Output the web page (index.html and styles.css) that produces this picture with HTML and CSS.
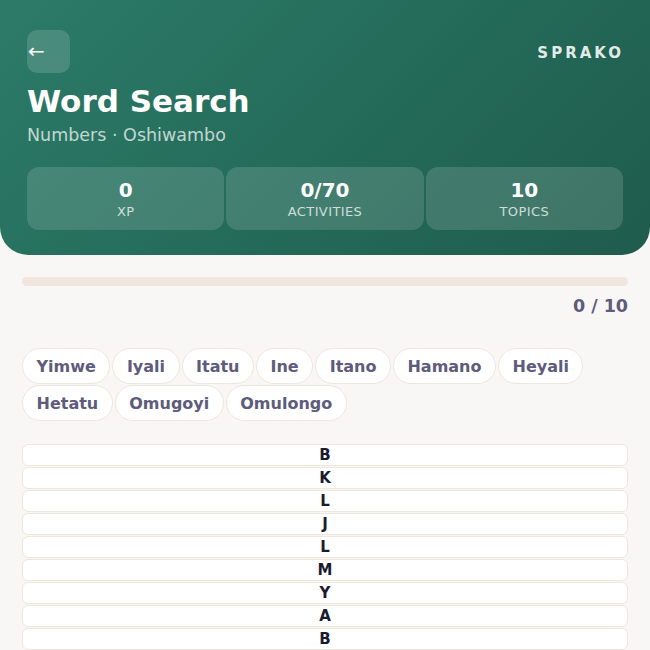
FILE: index.html
```html
<!DOCTYPE html>
<html lang="en">
<head>
    <meta charset="UTF-8">
    <meta name="viewport" content="width=device-width, initial-scale=1.0">
    <title>Word Search</title>
    <link rel="stylesheet" href="styles.css">
</head>
<body>
    <!-- Top banner -->
    <header class="hero">
        <div class="hero-top">
            <button class="back-btn">&larr;</button>
            <span class="brand">SPRAKO</span>
        </div>
        <h1>Word Search</h1>
        <p class="subtitle">Numbers · Oshiwambo</p>

        <div class="stats">
            <div class="stat">
                <span class="stat-value">0</span>
                <span class="stat-label">XP</span>
            </div>
            <div class="stat">
                <span class="stat-value">0/70</span>
                <span class="stat-label">Activities</span>
            </div>
            <div class="stat">
                <span class="stat-value">10</span>
                <span class="stat-label">Topics</span>
            </div>
        </div>
    </header>

    <main class="game">
        <div class="progress"><div class="progress-fill"></div></div>
        <div class="found-count">0 / 10</div>

        <!-- Words to find -->
        <div class="word-list">
            <span class="word">Yimwe</span>
            <span class="word">Iyali</span>
            <span class="word">Itatu</span>
            <span class="word">Ine</span>
            <span class="word">Itano</span>
            <span class="word">Hamano</span>
            <span class="word">Heyali</span>
            <span class="word">Hetatu</span>
            <span class="word">Omugoyi</span>
            <span class="word">Omulongo</span>
        </div>

        <!-- Letter grid -->
        <div class="grid">
            <div class="grid-row">B</div>
            <div class="grid-row">K</div>
            <div class="grid-row">L</div>
            <div class="grid-row">J</div>
            <div class="grid-row">L</div>
            <div class="grid-row">M</div>
            <div class="grid-row">Y</div>
            <div class="grid-row">A</div>
            <div class="grid-row">B</div>
        </div>
    </main>
</body>
</html>
```

FILE: styles.css
```css
body {
    font-family: "DejaVu Sans", sans-serif;
    margin: 0;
    padding: 0;
    background-color: #f9f7f5;
}

.hero {
    background: linear-gradient(135deg, #2c7b68 0%, #246a59 55%, #1f5c4d 100%);
    color: #fff;
    padding: 30px 27px 25px;
    border-radius: 0 0 28px 28px;
}

.hero-top {
    display: flex;
    justify-content: space-between;
    align-items: center;
}

.back-btn {
    width: 43px;
    height: 43px;
    border: none;
    border-radius: 10px;
    background-color: rgba(255, 255, 255, 0.15);
    color: #fff;
    font-family: "DejaVu Sans", sans-serif;
    font-size: 20px;
    text-align: left;
    padding: 0 0 2px 1px;
    cursor: pointer;
}

.brand {
    font-size: 15px;
    font-weight: bold;
    letter-spacing: 3px;
    color: rgba(255, 255, 255, 0.88);
    margin: 2px -1px 0 0;
}

.hero h1 {
    font-size: 31px;
    margin: 9px 0 0;
    line-height: 38px;
}

.subtitle {
    font-size: 17.5px;
    margin: 5px 0 0;
    color: rgba(255, 255, 255, 0.72);
}

.stats {
    display: flex;
    gap: 2px;
    margin-top: 22px;
}

.stat {
    flex: 1;
    height: 63px;
    border-radius: 12px;
    background-color: rgba(255, 255, 255, 0.14);
    display: flex;
    flex-direction: column;
    align-items: center;
    justify-content: center;
}

.stat-value {
    font-size: 20px;
    font-weight: bold;
    line-height: 24px;
}

.stat-label {
    font-size: 13px;
    text-transform: uppercase;
    letter-spacing: 0.4px;
    color: rgba(255, 255, 255, 0.75);
    line-height: 16px;
    margin-top: 2px;
}

.game {
    padding: 22px 22px 0;
}

.progress {
    height: 9px;
    border-radius: 5px;
    background-color: #f0e6dd;
    overflow: hidden;
}

.progress-fill {
    width: 0;
    height: 100%;
    background-color: #2c7b68;
}

.found-count {
    text-align: right;
    font-size: 17.5px;
    font-weight: bold;
    color: #5e5b7b;
    margin-top: 10px;
}

.word-list {
    display: flex;
    flex-wrap: wrap;
    gap: 1px 2px;
    margin-top: 32px;
}

.word {
    height: 36px;
    box-sizing: border-box;
    padding: 0 13.5px;
    display: flex;
    align-items: center;
    background-color: #fff;
    border: 1.5px solid #f0e6dc;
    border-radius: 18px;
    font-size: 16px;
    font-weight: bold;
    color: #5e5b7c;
}

.grid {
    display: flex;
    flex-direction: column;
    gap: 1px;
    margin-top: 23px;
}

.grid-row {
    height: 22px;
    box-sizing: border-box;
    background-color: #fff;
    border: 1.5px solid #f0e6dc;
    border-radius: 6px;
    text-align: center;
    font-size: 15px;
    font-weight: bold;
    line-height: 20px;
    color: #1b1b30;
}
```
